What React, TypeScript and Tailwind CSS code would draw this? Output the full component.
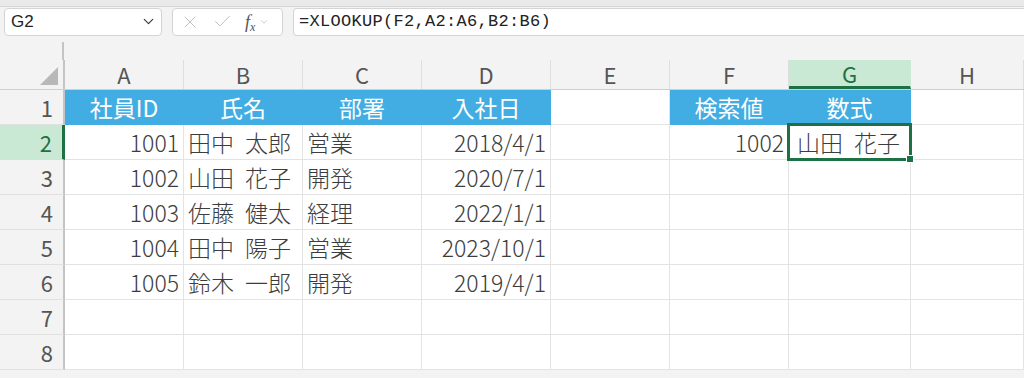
import { ChevronDown, X, Check } from 'lucide-react';

type Col = { letter: string; w: string };

const COLS: Col[] = [
  { letter: 'A', w: 'w-[119px]' },
  { letter: 'B', w: 'w-[119px]' },
  { letter: 'C', w: 'w-[119px]' },
  { letter: 'D', w: 'w-[129px]' },
  { letter: 'E', w: 'w-[119px]' },
  { letter: 'F', w: 'w-[119px]' },
  { letter: 'G', w: 'w-[122px]' },
  { letter: 'H', w: 'flex-1' },
];

// text per row, A..H; '' = empty cell
const ROWS: string[][] = [
  ['社員ID', '氏名', '部署', '入社日', '', '検索値', '数式', ''],
  ['1001', '田中 太郎', '営業', '2018/4/1', '', '1002', '山田 花子', ''],
  ['1002', '山田 花子', '開発', '2020/7/1', '', '', '', ''],
  ['1003', '佐藤 健太', '経理', '2022/1/1', '', '', '', ''],
  ['1004', '田中 陽子', '営業', '2023/10/1', '', '', '', ''],
  ['1005', '鈴木 一郎', '開発', '2019/4/1', '', '', '', ''],
  ['', '', '', '', '', '', '', ''],
  ['', '', '', '', '', '', '', ''],
];

const isNumeric = (s: string) => /^[0-9/]+$/.test(s);

const FONT = "font-['Noto_Sans_CJK_JP',sans-serif]";

const Cell = ({ text, row, col, w }: { text: string; row: number; col: number; w: string }) => {
  const header = row === 0 && text !== '';
  const selected = row === 1 && col === 6;
  const align = header ? 'justify-center' : isNumeric(text) ? 'justify-end' : 'justify-start';
  return (
    <div
      className={`${w} relative h-[35px] flex items-center ${align} px-[4px] border-r border-b shrink-0 ${
        selected ? 'z-10' : ''
      } ${header ? 'bg-[#42ade2] border-[#42ade2] text-white' : 'bg-white border-[#e3e3e3] text-[#3d3d3d]'}`}
    >
      <span
        className={`text-[23px] leading-none whitespace-nowrap [word-spacing:6px] ${
          header ? 'font-normal' : 'font-light'
        } ${selected ? 'pl-[4px]' : ''}`}
      >
        {text}
      </span>
      {selected && (
        <div className="absolute left-[-2px] top-[-2px] right-[-2px] bottom-[-2px] border-[3px] border-[#1e7145]">
          <div className="absolute right-[-5px] bottom-[-5px] w-[8px] h-[8px] bg-[#1e7145] border border-white" />
        </div>
      )}
    </div>
  );
};

export default function App() {
  return (
    <div className={`w-[1024px] h-[378px] overflow-hidden bg-[#f3f3f3] ${FONT}`}>
      {/* top strip */}
      <div className="h-[7px] bg-[#e9e9e9] border-b border-[#d6d6d6]" />

      {/* formula bar */}
      <div className="flex items-center gap-[10px] pl-[4px] h-[29px]">
        <div className="w-[158px] h-[28px] bg-white border border-[#d4d4d4] rounded-[4px] flex items-center justify-between pl-[6px] pr-[4px]">
          <span className="text-[17px] text-[#222] font-['Liberation_Sans',sans-serif]">G2</span>
          <ChevronDown size={17} strokeWidth={1.6} className="text-[#333]" />
        </div>
        <div className="w-[111px] h-[28px] bg-white border border-[#d4d4d4] rounded-[4px] flex items-center gap-[12px] pl-[7px]">
          <X size={20} strokeWidth={1} className="text-[#b5b5b5]" />
          <Check size={21} strokeWidth={1} className="text-[#b5b5b5]" />
          <span className="flex items-center gap-[4px] text-[#555]">
            <span className="italic text-[18px] leading-none font-['Liberation_Serif',serif]">
              f<sub className="text-[12px]">x</sub>
            </span>
            <ChevronDown size={10} strokeWidth={1.5} className="text-[#aaa]" />
          </span>
        </div>
        <div className="flex-1 h-[28px] bg-white border-y border-l border-[#d4d4d4] rounded-l-[4px] flex items-center pl-[5px]">
          <span className="text-[17px] text-[#222] font-['Liberation_Mono',monospace] tracking-[0.3px]">
            =XLOOKUP(F2,A2:A6,B2:B6)
          </span>
        </div>
      </div>

      {/* gap area with splitter */}
      <div className="h-[24px] flex">
        <div className="w-[65px] h-full flex justify-end pr-[1px] pt-[6px]">
          <div className="w-[2px] h-full bg-[#c4c4c4]" />
        </div>
      </div>

      {/* column headers */}
      <div className="flex h-[30px] border-b border-[#cfcfcf]">
        <div className="w-[65px] shrink-0 border-r-2 border-[#c4c4c4] flex items-end justify-end pr-[5px] pb-[4px]">
          <div className="w-0 h-0 border-l-[18px] border-l-transparent border-b-[18px] border-b-[#b8b8b8]" />
        </div>
        {COLS.map((c) => {
          const sel = c.letter === 'G';
          return (
            <div
              key={c.letter}
              className={`${c.w} shrink-0 flex items-center justify-center border-r text-[22px] ${
                sel
                  ? 'bg-[#cae9d5] text-[#1e7145] border-[#cae9d5] border-b-[3px] border-b-[#1e7145]'
                  : 'text-[#555] border-[#dedede]'
              }`}
            >
              {c.letter}
            </div>
          );
        })}
      </div>

      {/* rows */}
      {ROWS.map((row, r) => {
        const sel = r === 1;
        return (
          <div key={r} className="flex">
            <div
              className={`w-[65px] h-[35px] shrink-0 flex items-center justify-end pr-[10px] border-b text-[22px] ${
                sel
                  ? 'bg-[#cae9d5] text-[#1e7145] border-r-[3px] border-r-[#1e7145] border-b-[#cae9d5]'
                  : 'text-[#555] border-r-2 border-r-[#c4c4c4] border-b-[#e1e1e1]'
              }`}
            >
              {r + 1}
            </div>
            {COLS.map((c, ci) => (
              <Cell key={c.letter} text={row[ci]} row={r} col={ci} w={c.w} />
            ))}
          </div>
        );
      })}
    </div>
  );
}
